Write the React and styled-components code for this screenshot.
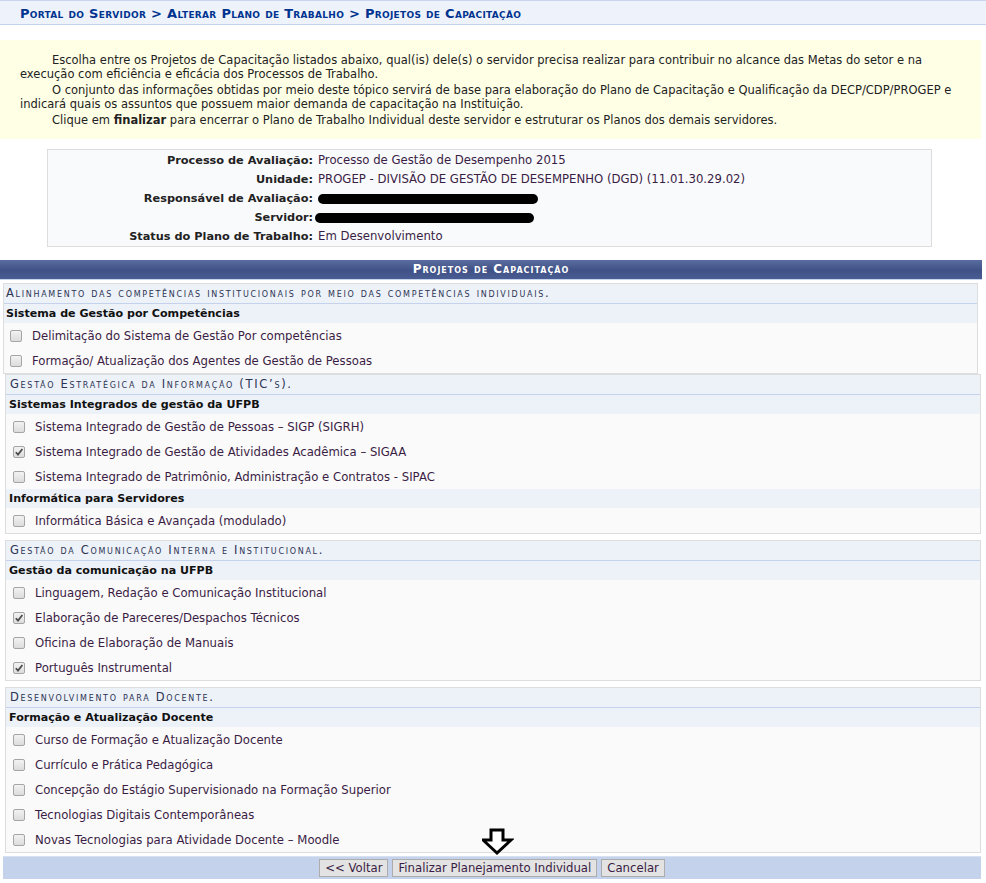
import React from 'react';
import styled, { createGlobalStyle } from 'styled-components';

const GlobalStyle = createGlobalStyle`
  html, body { margin: 0; padding: 0; background: #fff; }
  body {
    font-family: "DejaVu Sans", Verdana, sans-serif;
    font-size: 11.7px;
    color: #222;
  }
  * { box-sizing: border-box; }
`;

const Page = styled.div`
  position: relative;
  width: 986px;
  padding-bottom: 5px;
`;

const Breadcrumb = styled.h2`
  margin: 0;
  height: 25px;
  border-top: 1px solid #c8d5ec;
  border-bottom: 1px solid #c4d2eb;
  background: #eef3fb;
  padding: 3px 0 0 20px;
  font-size: 13px;
  letter-spacing: 0.3px;
  font-weight: bold;
  font-variant: small-caps;
  line-height: 20px;
  color: #003390;
`;

const Notice = styled.div`
  margin: 15px 5px 10px 0;
  background: #ffffe6;
  padding: 13px 20px 10px;
  font-size: 11.5px;
  line-height: 14px;
  color: #222;
`;

const NoticePar = styled.p`
  margin: 0 0 2px;
  text-indent: 32px;
`;

const Details = styled.div`
  margin: 0 0 13px 47px;
  width: 885px;
  padding-top: 1px;
  border: 1px solid #dddddd;
  background: #f9fafc;
  display: grid;
  grid-template-columns: 265px 1fr;
  column-gap: 5px;
`;

const DLabel = styled.div`
  text-align: right;
  font-weight: bold;
  font-size: 11.3px;
  height: 19px;
  line-height: 19px;
  color: #222;
`;

const DValue = styled.div`
  height: 19px;
  line-height: 19px;
  color: #3a1d45;
  display: flex;
  align-items: center;
`;

const Redacted = styled.span`
  display: inline-block;
  width: ${p => p.$w}px;
  height: 10px;
  background: #000;
  border-radius: 5px;
  margin-left: ${p => p.$ml || 0}px;
`;

const Panel = styled.div`
  width: 986px;
`;

const PanelHeader = styled.div`
  width: 982px;
  height: 20px;
  line-height: 19px;
  background: linear-gradient(#5a6da0, #3f5186 55%, #4a5d92);
  border-bottom: 1px solid #c4d2eb;
  color: #fff;
  font-size: 12px;
  font-weight: bold;
  font-variant: small-caps;
  letter-spacing: 1px;
  text-align: center;
  margin-bottom: 3px;
`;

const Section = styled.div`
  margin-left: ${p => (p.$first ? 3 : 5)}px;
  margin-bottom: ${p => (p.$first || p.$last ? 0 : 6)}px;
  width: ${p => (p.$first ? 975 : 976)}px;
  border: 1px solid #dddddd;
  background: #fafafa;
`;

const SectionTitle = styled.div`
  height: 20px;
  line-height: 19px;
  padding-left: ${p => (p.$first ? 2 : 4)}px;
  background: #edf1f8;
  border-bottom: 1px solid #c4d2eb;
  font-size: 11.5px;
  font-variant: small-caps;
  letter-spacing: 1.7px;
  color: #2c3454;
`;

const GroupTitle = styled.div`
  height: 19px;
  line-height: 19px;
  padding-left: ${p => (p.$first ? 2 : 3)}px;
  background: #edf1f8;
  font-weight: bold;
  font-size: 11.1px;
  color: #111;
`;

const Item = styled.label`
  height: 25px;
  display: flex;
  align-items: center;
  gap: 10px;
  padding-left: ${p => (p.$first ? 6 : 7)}px;
  padding-top: 1px;
  color: #3a1d45;
`;

const Box = styled.span`
  width: 12px;
  height: 12px;
  border: 1px solid #a5a5a5;
  border-radius: 2px;
  background: linear-gradient(#f2f2f2, #dcdcdc);
  display: inline-flex;
  align-items: center;
  justify-content: center;
  flex: none;
`;

const Footer = styled.div`
  margin: 3px 0 0 3px;
  width: 978px;
  height: 23px;
  background: #c4d2eb;
  border-top: 1px solid #d6e0f1;
  display: flex;
  justify-content: center;
  align-items: center;
  gap: 4px;
`;

const Button = styled.button`
  height: 18px;
  padding: 0 5px;
  border: 1px solid #acacac;
  background: #e3e3e3;
  font-family: "DejaVu Sans", Verdana, sans-serif;
  font-size: 11.7px;
  color: #3a1d45;
  line-height: 16px;
`;

const Arrow = styled.svg`
  position: absolute;
  left: 482px;
  top: 828px;
`;

const Checkbox = ({ checked }) => (
  <Box>
    {checked && (
      <svg width="10" height="10" viewBox="0 0 10 10">
        <path d="M1.8 5.2 L4 7.6 L8.4 2" fill="none" stroke="#4a4a4a" strokeWidth="1.7" />
      </svg>
    )}
  </Box>
);

const sections = [
  {
    title: 'Alinhamento das competências institucionais por meio das competências individuais.',
    first: true,
    groups: [
      {
        name: 'Sistema de Gestão por Competências',
        items: [
          ['Delimitação do Sistema de Gestão Por competências', false],
          ['Formação/ Atualização dos Agentes de Gestão de Pessoas', false],
        ],
      },
    ],
  },
  {
    title: 'Gestão Estratégica da Informação (TIC’s).',
    groups: [
      {
        name: 'Sistemas Integrados de gestão da UFPB',
        items: [
          ['Sistema Integrado de Gestão de Pessoas – SIGP (SIGRH)', false],
          ['Sistema Integrado de Gestão de Atividades Acadêmica – SIGAA', true],
          ['Sistema Integrado de Patrimônio, Administração e Contratos - SIPAC', false],
        ],
      },
      {
        name: 'Informática para Servidores',
        items: [['Informática Básica e Avançada (modulado)', false]],
      },
    ],
  },
  {
    title: 'Gestão da Comunicação Interna e Institucional.',
    groups: [
      {
        name: 'Gestão da comunicação na UFPB',
        items: [
          ['Linguagem, Redação e Comunicação Institucional', false],
          ['Elaboração de Pareceres/Despachos Técnicos', true],
          ['Oficina de Elaboração de Manuais', false],
          ['Português Instrumental', true],
        ],
      },
    ],
  },
  {
    title: 'Desenvolvimento para Docente.',
    last: true,
    groups: [
      {
        name: 'Formação e Atualização Docente',
        items: [
          ['Curso de Formação e Atualização Docente', false],
          ['Currículo e Prática Pedagógica', false],
          ['Concepção do Estágio Supervisionado na Formação Superior', false],
          ['Tecnologias Digitais Contemporâneas', false],
          ['Novas Tecnologias para Atividade Docente – Moodle', false],
        ],
      },
    ],
  },
];

export default function App() {
  return (
    <>
      <GlobalStyle />
      <Page>
        <Breadcrumb>
          Portal do Servidor &gt; Alterar Plano de Trabalho &gt; Projetos de Capacitação
        </Breadcrumb>

        <Notice>
          <NoticePar>
            Escolha entre os Projetos de Capacitação listados abaixo, qual(is) dele(s) o servidor precisa
            realizar para contribuir no alcance das Metas do setor e na execução com eficiência e eficácia
            dos Processos de Trabalho.
          </NoticePar>
          <NoticePar>
            O conjunto das informações obtidas por meio deste tópico servirá de base para elaboração do
            Plano de Capacitação e Qualificação da DECP/CDP/PROGEP e indicará quais os assuntos que possuem
            maior demanda de capacitação na Instituição.
          </NoticePar>
          <NoticePar>
            Clique em <b>finalizar</b> para encerrar o Plano de Trabalho Individual deste servidor e
            estruturar os Planos dos demais servidores.
          </NoticePar>
        </Notice>

        <Details>
          <DLabel>Processo de Avaliação:</DLabel>
          <DValue>Processo de Gestão de Desempenho 2015</DValue>
          <DLabel>Unidade:</DLabel>
          <DValue>PROGEP - DIVISÃO DE GESTÃO DE DESEMPENHO (DGD) (11.01.30.29.02)</DValue>
          <DLabel>Responsável de Avaliação:</DLabel>
          <DValue>
            <Redacted $w={220} />
          </DValue>
          <DLabel>Servidor:</DLabel>
          <DValue>
            <Redacted $w={219} $ml={-3} />
          </DValue>
          <DLabel>Status do Plano de Trabalho:</DLabel>
          <DValue>Em Desenvolvimento</DValue>
        </Details>

        <Panel>
          <PanelHeader>Projetos de Capacitação</PanelHeader>
          {sections.map((s, i) => (
            <Section key={i} $first={s.first} $last={s.last}>
              <SectionTitle $first={s.first}>{s.title}</SectionTitle>
              {s.groups.map((g, j) => (
                <div key={j}>
                  <GroupTitle $first={s.first}>{g.name}</GroupTitle>
                  {g.items.map(([label, checked], k) => (
                    <Item key={k} $first={s.first}>
                      <Checkbox checked={checked} />
                      {label}
                    </Item>
                  ))}
                </div>
              ))}
            </Section>
          ))}
          <Footer>
            <Button>&lt;&lt; Voltar</Button>
            <Button>Finalizar Planejamento Individual</Button>
            <Button>Cancelar</Button>
          </Footer>
        </Panel>

        <Arrow width="32" height="28" viewBox="0 0 32 28">
          <path d="M9 2 H21 V12 H29 L15 25 L1 12 H9 Z" fill="#fff" stroke="#000" strokeWidth="3" strokeLinejoin="miter" />
        </Arrow>
      </Page>
    </>
  );
}
